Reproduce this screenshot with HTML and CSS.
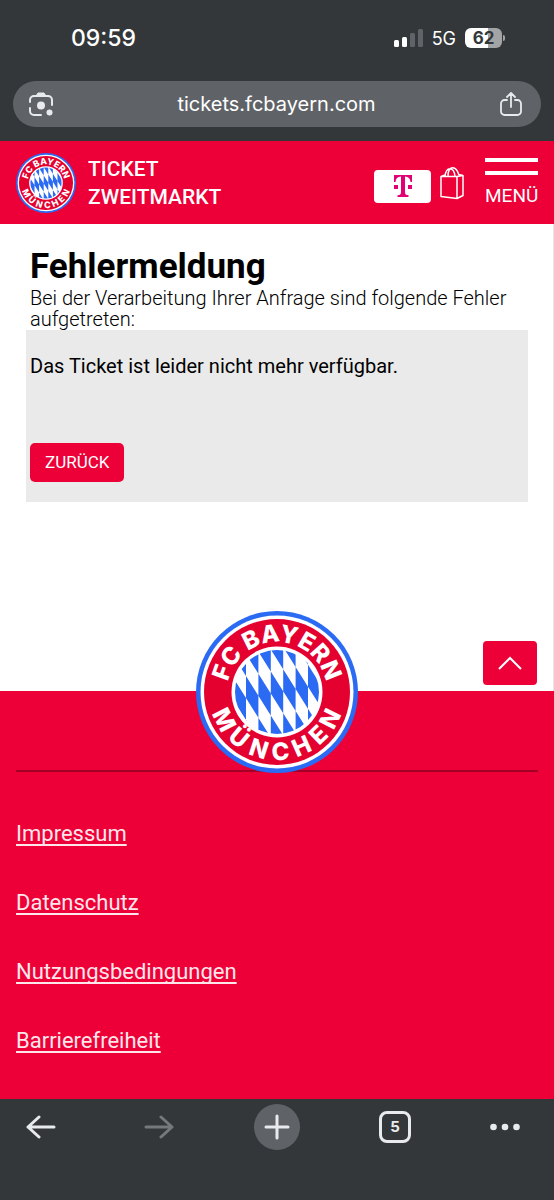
FILE: index.html
```html
<!DOCTYPE html>
<html lang="de">
<head>
<meta charset="utf-8">
<meta name="viewport" content="width=device-width, initial-scale=1">
<title>Ticket Zweitmarkt – Fehlermeldung</title>
<link rel="stylesheet" href="styles.css">
</head>
<body>
<svg class="defs" aria-hidden="true">
  <defs>
    <clipPath id="core"><circle r="42"/></clipPath>
    <path id="arc-top" d="M-50 0A50 50 0 0 1 50 0"/>
    <symbol id="crest" viewBox="-81 -81 162 162">
      <circle r="81" fill="#2b6af3"/>
      <circle r="76.500" fill="#fff"/>
      <circle r="73" fill="#e4002f"/>
      <circle r="45.500" fill="#fff"/>
      <g clip-path="url(#core)">
        <path transform="matrix(1 1.590 0 1 -6.200 -20.500)" fill="none" stroke="#2b6af3" stroke-width="12.400" stroke-dasharray="22" d="M-43.400-132v264M-31-110v264M-18.600-132v264M-6.200-154v308M6.200-132v264M18.600-154v264M31-132v264M43.400-154v264"/>
      </g>
      <g class="crest-text">
        <text font-size="24" text-anchor="middle"><textPath href="#arc-top" startOffset="50%">FC BAYERN</textPath></text>
        <text font-size="24" x="-65.400 -50.300 -29.500 -5 19.700 41.900 56.600" y="21.500 46.600 61.900 68.400 65.600 54 38.800" rotate="63 40 18 -3 -24 -44 -63">MÜNCHEN</text>
      </g>
    </symbol>
  </defs>
</svg>

<div class="browser-top">
  <div class="status">
    <span class="clock">09:59</span>
    <div class="status-right">
      <svg width="30" height="18" viewBox="0 0 30 18" aria-hidden="true"><rect x="1" y="11" width="5" height="7" rx="1.500" fill="#fff"/><rect x="9" y="8" width="5" height="10" rx="1.500" fill="#fff"/><rect x="17" y="4" width="5" height="14" rx="1.500" fill="#606468"/><rect x="25" y="0" width="5" height="18" rx="1.500" fill="#606468"/></svg>
      <span class="network">5G</span>
      <span class="battery"><span class="battery-level">62</span></span>
    </div>
  </div>
  <div class="address">
    <button class="icon-button" aria-label="Bildsuche">
      <svg width="26" height="26" viewBox="0 0 26 26" fill="none" stroke="#e8eaed" stroke-width="2" stroke-linecap="round"><path d="M2 11V9a4 4 0 0 1 4-4h14a4 4 0 0 1 4 4v5M2 17v3a4 4 0 0 0 4 4h7"/><path d="M8 5l2-3h6l2 3z" fill="#e8eaed" stroke-width="1"/><circle cx="13" cy="14.500" r="4" fill="#e8eaed" stroke="none"/><circle cx="21.500" cy="21.500" r="3" fill="#e8eaed" stroke="none"/></svg>
    </button>
    <span class="url">tickets.fcbayern.com</span>
    <button class="icon-button" aria-label="Teilen">
      <svg width="24" height="26" viewBox="0 0 24 26" fill="none" stroke="#e8eaed" stroke-width="1.800" stroke-linecap="round" stroke-linejoin="round"><path d="M8 9H5.500A3.500 3.500 0 0 0 2 12.500v8A3.500 3.500 0 0 0 5.500 24h13a3.500 3.500 0 0 0 3.500-3.500v-8A3.500 3.500 0 0 0 18.500 9H16M12 16V2M8 6l4-4 4 4"/></svg>
    </button>
  </div>
</div>

<header class="site-header">
  <a class="brand" href="#">
    <svg class="brand-crest" aria-hidden="true"><use href="#crest"/></svg>
    <span>TICKET<br>ZWEITMARKT</span>
  </a>
  <div class="header-tools">
    <a class="sponsor" href="#" aria-label="Telekom">
      <svg width="20" height="22" viewBox="0 0 20 22" fill="#e20074"><path d="M1 0h18v7h-1.500C17.300 3.500 15.500 1.500 12 1.400V17c0 2.500 1 3.200 3.500 3.300V22h-11v-1.700C7 20.200 8 19.500 8 17V1.400C4.500 1.500 2.700 3.500 2.500 7H1zM1 10h4v4H1zM15 10h4v4h-4z"/></svg>
    </a>
    <a class="bag" href="#" aria-label="Warenkorb">
      <svg width="26" height="34" viewBox="0 0 26 34" fill="none" stroke="#fff" stroke-width="1.500" stroke-linejoin="round"><path d="M2 10.500v20l16 2V10.500zM18 10.500l6-1v20l-6 3M2 10.500l4-1.500M20 8.500l4 1M6 10.500C7 0 15 0 16 10.500M9 10.500C9-1 17-1 20 9"/></svg>
    </a>
    <button class="menu">
      <span class="menu-bar"></span>
      <span class="menu-bar"></span>
      <span>MENÜ</span>
    </button>
  </div>
</header>

<main class="content">
  <h1>Fehlermeldung</h1>
  <p class="intro">Bei der Verarbeitung Ihrer Anfrage sind folgende Fehler aufgetreten:</p>
  <section class="notice">
    <p>Das Ticket ist leider nicht mehr verfügbar.</p>
    <button class="back">ZURÜCK</button>
  </section>
  <a class="to-top" href="#" aria-label="Nach oben">
    <svg width="24" height="14" viewBox="0 0 24 14" fill="none" stroke="#fff" stroke-width="2"><path d="M1 13L12 2l11 11"/></svg>
  </a>
</main>

<footer class="site-footer">
  <svg class="footer-crest" role="img" aria-label="FC Bayern München"><use href="#crest"/></svg>
  <nav class="footer-links">
    <a href="#">Impressum</a>
    <a href="#">Datenschutz</a>
    <a href="#">Nutzungsbedingungen</a>
    <a href="#">Barrierefreiheit</a>
  </nav>
</footer>

<div class="toolbar">
  <button class="tool" aria-label="Zurück"><svg width="30" height="26" viewBox="0 0 30 26" fill="none" stroke="#e8eaed" stroke-width="3" stroke-linecap="round" stroke-linejoin="round"><path d="M28 13H2M13 3L2 13l11 10"/></svg></button>
  <button class="tool" aria-label="Vor"><svg width="30" height="26" viewBox="0 0 30 26" fill="none" stroke="#76797c" stroke-width="3" stroke-linecap="round" stroke-linejoin="round"><path d="M2 13h26M17 3l11 10-11 10"/></svg></button>
  <button class="tool tool-new" aria-label="Neuer Tab"><svg width="26" height="26" viewBox="0 0 26 26" fill="none" stroke="#e8eaed" stroke-width="3" stroke-linecap="round"><path d="M13 2v22M2 13h22"/></svg></button>
  <button class="tool"><span class="tab-count">5</span></button>
  <button class="tool tool-more" aria-label="Mehr"><svg width="30" height="8" viewBox="0 0 30 8" fill="#e8eaed"><circle cx="3.500" cy="4" r="3.300"/><circle cx="15" cy="4" r="3.300"/><circle cx="26.500" cy="4" r="3.300"/></svg></button>
</div>
</body>
</html>
```

FILE: styles.css
```css
* {
  box-sizing: border-box;
}

body {
  margin: 0;
  min-height: 100vh;
  display: flex;
  flex-direction: column;
  background: #fff;
  color: #000;
  font-family: Roboto, "Liberation Sans", sans-serif;
}

h1,
p {
  margin: 0;
}

button {
  margin: 0;
  padding: 0;
  border: 0;
  background: none;
  color: inherit;
  font: inherit;
}

svg {
  display: block;
}

.defs {
  position: absolute;
  width: 0;
  height: 0;
}

.crest-text {
  font-family: Inter, "Liberation Sans", sans-serif;
  font-weight: 800;
  fill: #fff;
}

/* Browser chrome */
.browser-top {
  padding: 0 13px 14px;
  background: #343739;
  color: #fff;
  font-family: Inter, "Liberation Sans", sans-serif;
}

.status {
  display: flex;
  align-items: center;
  justify-content: space-between;
  height: 81px;
  padding: 0 39px 5px 58px;
}

.clock {
  font-size: 23px;
  font-weight: 500;
}

.status-right {
  display: flex;
  align-items: center;
  gap: 9px;
}

.network {
  font-size: 18px;
  font-weight: 400;
}

.battery {
  position: relative;
  width: 37px;
  height: 20px;
  border-radius: 6px;
  background: linear-gradient(90deg, #fff 62%, #a2a4a6 62%);
  color: #343739;
  font-size: 17px;
  font-weight: 700;
  line-height: 20px;
  text-align: center;
}

.battery::after {
  content: "";
  position: absolute;
  top: 7px;
  right: -3px;
  width: 2px;
  height: 6px;
  border-radius: 0 2px 2px 0;
  background: #a2a4a6;
}

.address {
  display: flex;
  align-items: center;
  justify-content: space-between;
  height: 46px;
  padding: 0 18px 0 15px;
  border-radius: 23px;
  background: #5f6367;
}

.url {
  font-size: 20px;
}

/* Site header */
.site-header {
  display: flex;
  align-items: center;
  justify-content: space-between;
  min-height: 83px;
  padding: 0 16px;
  background: #ed0037;
  color: #fff;
}

.brand {
  display: flex;
  align-items: center;
  gap: 12px;
  color: inherit;
  font-size: 21px;
  font-weight: 500;
  line-height: 28px;
  text-decoration: none;
}

.brand-crest {
  width: 60px;
  height: 60px;
}

.header-tools {
  display: flex;
  align-items: center;
}

.sponsor {
  display: flex;
  align-items: center;
  justify-content: center;
  width: 57px;
  height: 33px;
  margin-top: 7px;
  border-radius: 4px;
  background: #fff;
}

.bag {
  margin: 0 20px 0 8px;
}

.menu {
  display: flex;
  flex-direction: column;
  gap: 9px;
  width: 53px;
  font-size: 19px;
  line-height: 24px;
}

.menu-bar {
  width: 100%;
  height: 4px;
  background: #fff;
}

/* Error message */
.content {
  flex: 1;
  display: flex;
  flex-direction: column;
  padding: 22px 16px 6px 26px;
  border-right: 1px solid #e6e6e6;
}

h1 {
  padding-left: 4px;
  font-size: 35px;
  font-weight: 700;
  line-height: 42px;
}

.intro {
  padding-left: 4px;
  font-size: 20px;
  font-weight: 300;
  line-height: 21px;
}

.notice {
  margin-right: 9px;
  padding: 24px 4px 20px;
  background: #eaeaea;
  font-size: 20px;
  line-height: 24px;
}

.back {
  display: block;
  height: 39px;
  margin-top: 65px;
  padding: 0 15px 2px;
  border-radius: 5px;
  background: #ed0037;
  color: #fff;
  font-size: 17px;
}

.to-top {
  display: flex;
  align-items: center;
  justify-content: center;
  align-self: flex-end;
  width: 54px;
  height: 44px;
  margin-top: auto;
  border-radius: 4px;
  background: #ed0037;
}

/* Site footer */
.site-footer {
  position: relative;
  padding: 79px 16px 44px;
  background: #ed0037;
}

.footer-crest {
  position: absolute;
  top: -80px;
  left: 50%;
  width: 162px;
  height: 162px;
  margin-left: -81px;
}

.footer-links {
  display: flex;
  flex-direction: column;
  align-items: flex-start;
  gap: 41px;
  padding-top: 48px;
  border-top: 2px solid #a30026;
}

.footer-links a {
  color: #ffe6eb;
  font-size: 22px;
  line-height: 28px;
  text-decoration-skip-ink: none;
  text-underline-offset: 3px;
}

/* Browser toolbar */
.toolbar {
  display: flex;
  align-items: flex-start;
  justify-content: space-between;
  height: 101px;
  padding: 5px 18px 0;
  background: #343739;
}

.tool {
  display: flex;
  align-items: center;
  justify-content: center;
  width: 46px;
  height: 46px;
}

.tool-new {
  border-radius: 50%;
  background: #5f6367;
}

.tool-more {
  justify-content: flex-start;
}

.tab-count {
  width: 32px;
  height: 32px;
  border: 3px solid #e8eaed;
  border-radius: 8px;
  color: #e8eaed;
  font-family: Inter, "Liberation Sans", sans-serif;
  font-size: 15px;
  font-weight: 700;
  line-height: 26px;
}
```
